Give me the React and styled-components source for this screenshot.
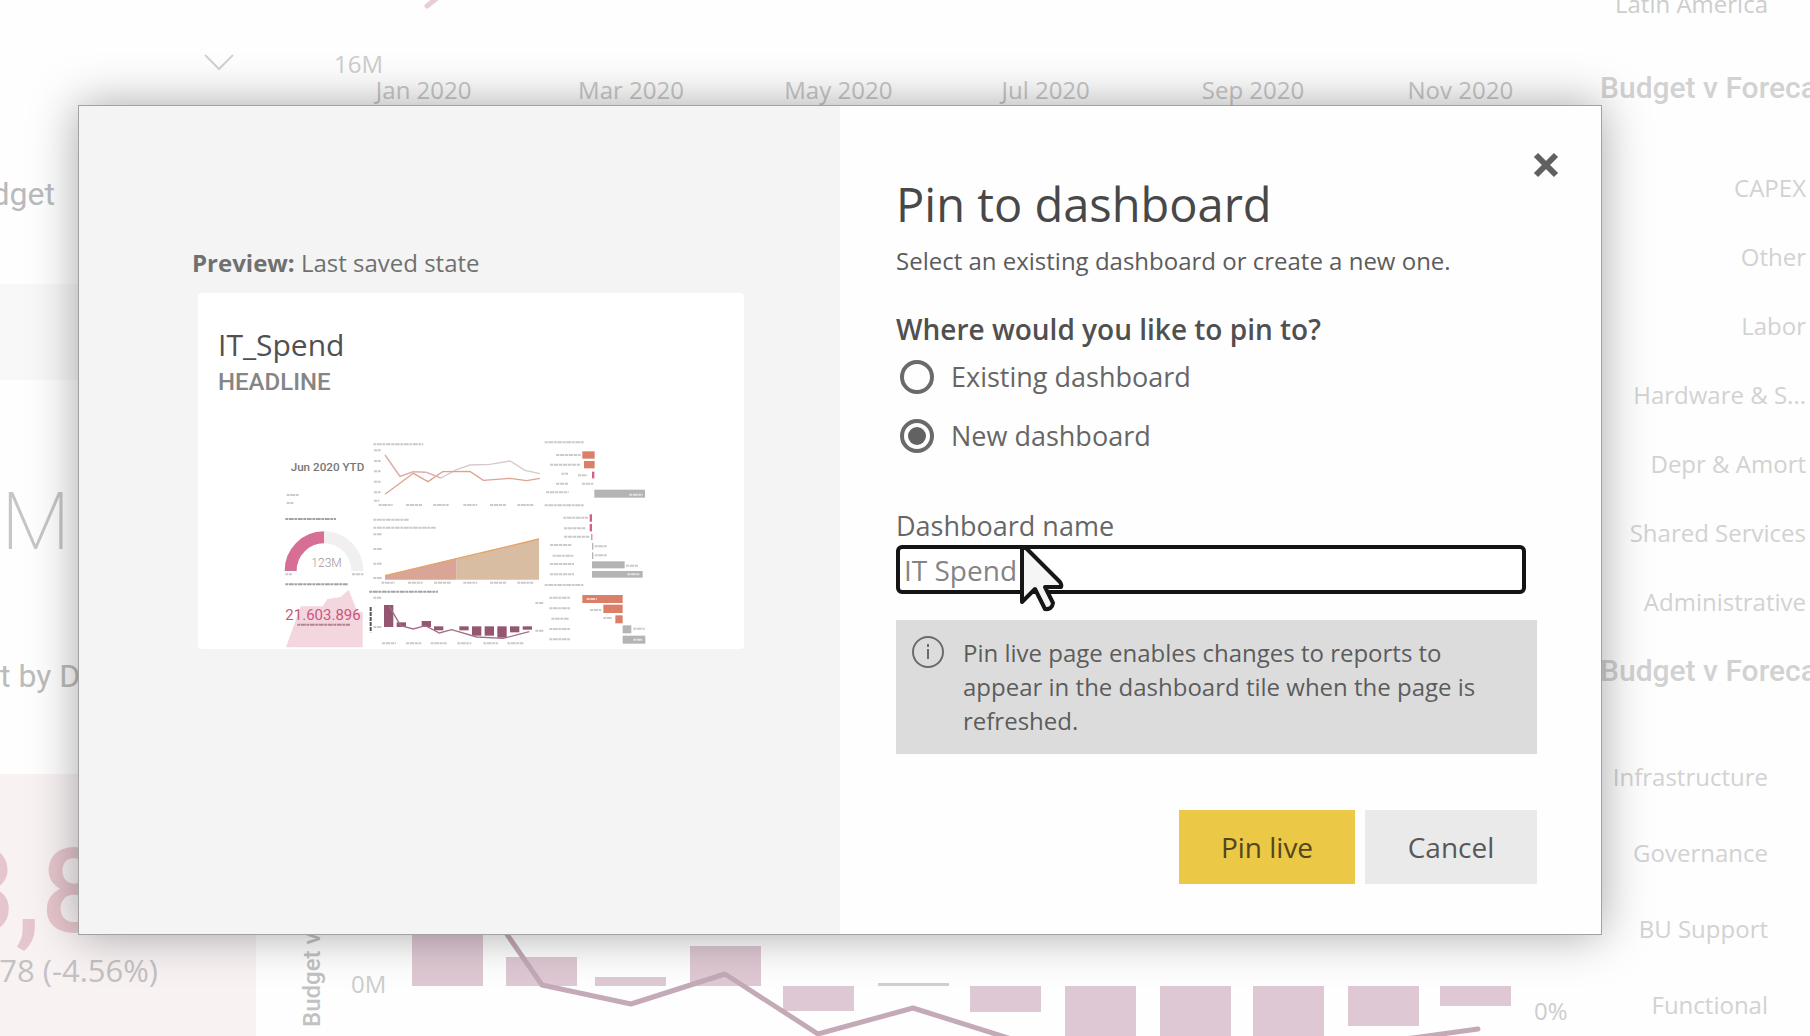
import React, { useState } from "react";
import styled, { createGlobalStyle } from "styled-components";

const GlobalStyle = createGlobalStyle`
  *, *::before, *::after { box-sizing: border-box; }
  body {
    margin: 0;
    background: #fefefe;
    font-family: "Open Sans", "Noto Sans", sans-serif;
  }
  h1, h2, h3, p, ul { margin: 0; padding: 0; font-weight: 400; }
`;

const Page = styled.div`
  position: relative;
  height: 100vh;
  overflow: hidden;
`;

/* ---------- report behind the dialog ---------- */

const Report = styled.main`
  display: grid;
  grid-template-columns: 256px 1fr 210px;
  height: 100%;
  color: #cdcdcd;
  white-space: nowrap;
`;

const Column = styled.section`
  display: flex;
  flex-direction: column;
  min-width: 0;
  overflow: hidden;
`;

const ChevronRow = styled.div`
  display: flex;
  justify-content: flex-end;
  padding: 52px 22px 0 0;
  height: 72px;
`;

const ClippedText = styled.div`
  display: flex;
  justify-content: flex-end;
  width: ${(p) => p.$width}px;
  color: ${(p) => p.$color || "#b9babd"};
  font-family: ${(p) => (p.$din ? "Roboto, sans-serif" : "inherit")};
  font-size: ${(p) => p.$size}px;
  font-weight: ${(p) => p.$weight || 400};
  line-height: ${(p) => p.$line}px;
  margin-top: ${(p) => p.$gap || 0}px;
`;

const Slicer = styled.div`
  height: 96px;
  margin-top: 70px;
  background: #f8f8f8;
`;

const KpiTitle = styled.h3`
  margin-top: 84px;
  color: #bcbcbc;
  font: 400 32px/40px Roboto, sans-serif;
`;

const Kpi = styled.div`
  flex: 1;
  margin-top: 78px;
  background: #f8f2f3;
`;

const AxisTop = styled.div`
  padding: 48px 0 0 78px;
  font-size: 24px;
  line-height: 32px;
`;

const Months = styled.div`
  display: grid;
  grid-template-columns: repeat(6, 1fr);
  padding: 0 36px 0 64px;
  margin-top: -6px;
  font-size: 24px;
  line-height: 32px;
  color: #c8c8c8;
  text-align: center;
`;

const BottomChart = styled.div`
  display: flex;
  margin-top: auto;
  height: 110px;
`;

const AxisTitle = styled.div`
  width: 84px;
  padding: 9px 42px 0 0;
  writing-mode: vertical-rl;
  transform: rotate(180deg);
  color: #c2c2c2;
  font: 500 24px/28px Roboto, sans-serif;
`;

const ChartSvg = styled.svg`
  display: block;
  flex: 1;
  min-width: 0;
  height: 110px;
`;

const TopLabel = styled.p`
  height: 20px;
  padding-right: 42px;
  margin-top: -12px;
  font-size: 24px;
  line-height: 32px;
  text-align: right;
`;

const ChartHeading = styled.h3`
  margin-top: ${(p) => p.$gap}px;
  color: #d2d2d2;
  font: 500 30px/40px Roboto, sans-serif;
`;

const Categories = styled.ul`
  margin-top: ${(p) => p.$gap}px;
  padding-right: ${(p) => p.$inset}px;
  list-style: none;
  font-size: 24px;
  line-height: ${(p) => p.$pitch}px;
  text-align: right;
  color: #d2d2d2;
  li { display: flex; justify-content: flex-end; }
`;

/* ---------- dialog ---------- */

const Overlay = styled.div`
  position: absolute;
  inset: 0;
  display: flex;
  align-items: flex-start;
  padding: 105px 208px 0 78px;
`;

const Dialog = styled.div`
  display: grid;
  grid-template-columns: 1fr 1fr;
  flex: 1;
  border: 1px solid #a2a2a2;
  background: #fefefe;
  box-shadow: 0 0 44px rgba(0, 0, 0, 0.34);
`;

const PreviewPane = styled.section`
  padding: 140px 96px 0 113px;
  background: #f4f4f4;
`;

const PreviewCaption = styled.p`
  color: #707070;
  font-size: 24px;
  line-height: 34px;
  b { font-weight: 700; }
`;

const Card = styled.div`
  margin: 13px 0 0 6px;
  padding: 32px 0 0 20px;
  border-radius: 4px;
  background: #fff;
`;

const CardTitle = styled.h2`
  color: #505050;
  font-size: 30px;
  line-height: 40px;
`;

const CardSubtitle = styled.p`
  margin-top: 2px;
  color: #858585;
  font: 500 24px/30px Roboto, sans-serif;
`;

const Thumbnail = styled.svg`
  display: block;
  width: 400px;
  max-width: 100%;
  height: 220px;
  margin: 32px 0 0 52px;
`;

const FormPane = styled.form`
  position: relative;
  display: flex;
  flex-direction: column;
  padding: 68px 64px 50px 56px;
  color: #5c5c5c;
`;

const CloseButton = styled.button`
  position: absolute;
  top: 40px;
  right: 36px;
  display: flex;
  align-items: center;
  justify-content: center;
  width: 38px;
  height: 38px;
  padding: 0;
  border: 0;
  background: none;
`;

const Title = styled.h1`
  color: #484848;
  font-size: 47px;
  line-height: 60px;
`;

const Subtitle = styled.p`
  margin-top: 10px;
  font-size: 24px;
  line-height: 34px;
`;

const Choices = styled.fieldset`
  display: flex;
  flex-direction: column;
  gap: 25px;
  min-width: 0;
  margin: 34px 0 0;
  padding: 0;
  border: 0;
`;

const Question = styled.legend`
  padding: 0 0 14px;
  color: #505050;
  font-size: 28px;
  font-weight: 600;
  line-height: 34px;
`;

const Choice = styled.label`
  display: flex;
  align-items: center;
  gap: 17px;
  padding-left: 4px;
  color: #666;
  font-size: 27px;
  line-height: 34px;
`;

const Radio = styled.input`
  appearance: none;
  display: grid;
  place-items: center;
  width: 34px;
  height: 34px;
  margin: 0;
  border: 4px solid #6a6a6a;
  border-radius: 50%;
  &:checked::before {
    content: "";
    width: 18px;
    height: 18px;
    border-radius: 50%;
    background: #626262;
  }
`;

const FieldLabel = styled.label`
  margin-top: 56px;
  color: #666;
  font-size: 27px;
  line-height: 34px;
`;

const InputWrap = styled.div`
  position: relative;
  margin: 2px 11px 0 0;
`;

const TextInput = styled.input`
  display: block;
  width: 100%;
  height: 49px;
  padding: 0 4px;
  border: 4px solid #141414;
  border-radius: 6px;
  outline: 0;
  background: #fff;
  color: #848484;
  font: 400 28px/34px "Open Sans", sans-serif;
`;

const Pointer = styled.svg`
  position: absolute;
  left: 123px;
  top: 0;
  width: 46px;
  height: 70px;
  pointer-events: none;
`;

const Notice = styled.div`
  display: flex;
  gap: 18px;
  margin-top: 26px;
  padding: 16px 40px 16px 16px;
  background: #dcdcdc;
  color: #5c5c5c;
  font-size: 24px;
  line-height: 34px;
  svg { flex: none; }
`;

const Actions = styled.div`
  display: flex;
  justify-content: flex-end;
  gap: 10px;
  margin-top: 56px;
`;

const Button = styled.button`
  width: ${(p) => (p.$primary ? 176 : 172)}px;
  height: 74px;
  padding: 0;
  border: 0;
  background: ${(p) => (p.$primary ? "#ebc846" : "#eaeaea")};
  color: ${(p) => (p.$primary ? "#54461c" : "#585858")};
  font: 400 28px/34px "Open Sans", sans-serif;
`;

const spendTypes = ["CAPEX", "Other", "Labor", "Hardware & S...", "Depr & Amort", "Shared Services", "Administrative"];
const areas = ["Infrastructure", "Governance", "BU Support", "Functional"];
const months = ["Jan 2020", "Mar 2020", "May 2020", "Jul 2020", "Sep 2020", "Nov 2020"];

// x, top and height of each variance bar
const bars = [
  [72, 0, 60], [166, 31, 29], [255, 51, 9], [350, 20, 40], [443, 60, 25], [538, 57, 3],
  [630, 60, 26], [725, 60, 60], [820, 60, 60], [913, 60, 60], [1008, 60, 40], [1100, 60, 20],
];

function VarianceChart() {
  return (
    <ChartSvg viewBox="0 0 1260 110" preserveAspectRatio="xMinYMin meet">
      {bars.map(([x, y, h], i) => (
        <rect key={x} x={x} y={y} width="71" height={h} fill={i === 5 ? "#d6cdd1" : "#dec8d3"} />
      ))}
      <polyline
        points="164,4 202,59 291,78 385,48 478,108 573,82 700,122 1000,122 1138,103"
        fill="none" stroke="#c4a9b7" strokeWidth="5" strokeLinejoin="round" strokeLinecap="round"
      />
      <g fill="#cdcdcd" fontSize="24">
        <text x="11" y="67">0M</text>
        <text x="1194" y="94">0%</text>
      </g>
    </ChartSvg>
  );
}

// tail of the trend line that ends above the month axis
const TrendTail = styled.svg`
  display: block;
  width: 20px;
  height: 10px;
  margin: 0 0 -10px 168px;
`;

function Dashes({ items, fill = "#a9a9a9" }) {
  return items.map(([x, y, w]) => (
    <line key={`${x}-${y}`} x1={x} y1={y} x2={x + w} y2={y} stroke={fill} strokeWidth="6" strokeDasharray="9 2 14 2" opacity="0.6" />
  ));
}

function DashboardThumbnail() {
  return (
    <Thumbnail viewBox="0 0 1200 660" role="img" aria-label="IT_Spend report page">
      <text x="62" y="126" fontFamily="Roboto, sans-serif" fontSize="35" fontWeight="500" fill="#777">Jun 2020 YTD</text>
      <Dashes items={[[50, 198, 38], [50, 222, 20]]} />
      <Dashes fill="#666" items={[[46, 270, 152], [46, 466, 188], [298, 488, 206]]} />
      <path d="M62 426 A100 100 0 0 1 162 325" fill="none" stroke="#d66e96" strokeWidth="36" />
      <path d="M162 325 A100 100 0 0 1 262 426" fill="none" stroke="#f2eff0" strokeWidth="36" />
      <text x="124" y="413" fontFamily="Roboto, sans-serif" fontSize="36" fontWeight="300" fill="#999">123M</text>
      <Dashes items={[[46, 436, 20], [246, 436, 34]]} />
      <path d="M48 655 L92 532 L158 532 L172 510 L212 504 L236 482 L262 548 L278 548 V655Z" fill="#f3d6de" />
      <text x="46" y="574" fontFamily="Roboto, sans-serif" fontSize="45" fill="#c9577d">21.603.896</text>
      <Dashes fill="#84505f" items={[[82, 587, 158]]} />

      <Dashes items={[
        [310, 46, 150], [312, 64, 20], [312, 96, 20], [312, 127, 20], [312, 158, 20], [312, 190, 20], [312, 215, 16],
        [326, 228, 42], [408, 228, 48], [490, 228, 46], [580, 228, 42], [660, 228, 48], [742, 228, 48],
        [310, 272, 106], [310, 296, 188], [310, 316, 26], [310, 360, 26], [310, 404, 26], [310, 447, 26],
        [334, 461, 40], [414, 461, 44], [492, 461, 50], [580, 461, 42], [660, 461, 48], [742, 461, 48],
        [310, 506, 24], [310, 594, 24], [336, 643, 42], [408, 643, 46], [482, 643, 48], [562, 643, 42], [640, 643, 44], [712, 643, 48],
        [796, 522, 24], [796, 605, 24],
      ]} />
      <polyline points="345,78 390,142 430,128 470,130 512,147 560,122 600,108 660,106 720,96 765,124 810,134" fill="none" stroke="#d8c9cb" strokeWidth="4" />
      <polyline points="345,196 430,133 474,158 518,128 600,127 640,154 720,148 770,155 810,148" fill="none" stroke="#dfa292" strokeWidth="4" />
      <polyline points="345,78 390,142 430,128 470,130 512,147" fill="none" stroke="#e4b1ab" strokeWidth="4" />
      <path d="M345 440 L560 388 V452 H345Z" fill="#d8a597" />
      <path d="M560 388 L807 330 V452 H560Z" fill="#d9bda3" />
      <polyline points="345,440 807,330" fill="none" stroke="#e5a266" strokeWidth="4" />
      <path d="M302 534V610" stroke="#555" strokeWidth="6" strokeDasharray="12 3" />
      <g fill="#955672">
        <rect x="342" y="528" width="28" height="66" /><rect x="380" y="580" width="28" height="14" />
        <rect x="455" y="576" width="28" height="18" /><rect x="492" y="592" width="28" height="12" />
        <rect x="568" y="592" width="28" height="12" /><rect x="606" y="592" width="28" height="28" />
        <rect x="644" y="592" width="28" height="28" /><rect x="682" y="592" width="28" height="34" />
        <rect x="720" y="592" width="28" height="18" /><rect x="758" y="592" width="28" height="10" />
      </g>
      <polyline points="358,532 392,590 430,600 466,590 508,612 545,602 620,624 700,628 778,608" fill="none" stroke="#9d7187" strokeWidth="4" />

      <Dashes items={[
        [824, 40, 118], [858, 78, 74], [840, 107, 90], [874, 134, 20], [924, 139, 28], [858, 164, 38], [936, 164, 34], [828, 190, 68], [824, 229, 118],
        [880, 266, 74], [882, 298, 66], [882, 323, 76], [840, 348, 66], [974, 352, 38], [848, 380, 62], [974, 379, 38],
        [840, 405, 72], [1068, 410, 38], [840, 436, 72], [824, 468, 116],
        [838, 506, 62], [838, 538, 62], [960, 543, 34], [844, 569, 52], [1000, 567, 26], [838, 600, 62], [1090, 599, 34], [838, 631, 62],
      ]} />
      <g fill="#da8069">
        <rect x="937" y="67" width="37" height="22" /><rect x="942" y="96" width="32" height="22" />
        <rect x="937" y="498" width="121" height="24" /><rect x="1000" y="527" width="58" height="25" />
        <rect x="1036" y="559" width="22" height="24" />
      </g>
      <g fill="#d06084">
        <rect x="966" y="128" width="7" height="20" /><rect x="959" y="256" width="7" height="22" />
        <rect x="959" y="285" width="7" height="22" /><rect x="964" y="315" width="3" height="18" />
      </g>
      <g fill="#b4b4b4">
        <rect x="973" y="182" width="152" height="24" /><rect x="966" y="342" width="4" height="20" />
        <rect x="966" y="370" width="4" height="20" /><rect x="966" y="397" width="98" height="21" />
        <rect x="966" y="426" width="152" height="20" /><rect x="1058" y="589" width="26" height="24" />
        <rect x="1058" y="620" width="68" height="24" />
      </g>
      <Dashes fill="#fff" items={[[1078, 197, 40], [1072, 436, 38], [950, 510, 30], [1090, 632, 28]]} />
    </Thumbnail>
  );
}

export default function App() {
  const [target, setTarget] = useState("new");
  const [name, setName] = useState("IT Spend");

  return (
    <Page>
      <GlobalStyle />
      <Report>
        <Column>
          <ChevronRow>
            <svg width="30" height="20" viewBox="0 0 30 20" fill="none" stroke="#d2d2d2" strokeWidth="2">
              <path d="M1 3 L15 17 L29 3" />
            </svg>
          </ChevronRow>
          <ClippedText $din $width={55} $size={32} $line={40} $gap={102}>dget</ClippedText>
          <Slicer />
          <ClippedText $din $width={70} $size={80} $weight={200} $line={100} $gap={92} $color="#c6c6c6">M</ClippedText>
          <KpiTitle>t by Department</KpiTitle>
          <Kpi>
            <ClippedText $din $width={107} $size={116} $weight={500} $line={116} $gap={60} $color="#e6c6cd">3,8</ClippedText>
            <ClippedText $width={158} $size={31} $line={40} $color="#c4c1c2">78 (-4.56%)</ClippedText>
          </Kpi>
        </Column>

        <Column>
          <TrendTail viewBox="0 0 20 10">
            <path d="M3 6 L13 -2" fill="none" stroke="#e6cdd6" strokeWidth="5" strokeLinecap="round" />
          </TrendTail>
          <AxisTop>16M</AxisTop>
          <Months>
            {months.map((m) => <span key={m}>{m}</span>)}
          </Months>
          <BottomChart>
            <AxisTitle>Budget v Forecast</AxisTitle>
            <VarianceChart />
          </BottomChart>
        </Column>

        <Column>
          <TopLabel>Latin America</TopLabel>
          <ChartHeading $gap={60}>Budget v Forecast</ChartHeading>
          <Categories $gap={45} $inset={4} $pitch={69}>
            {spendTypes.map((t) => <li key={t}>{t}</li>)}
          </Categories>
          <ChartHeading $gap={15}>Budget v Forecast</ChartHeading>
          <Categories $gap={48} $inset={42} $pitch={76}>
            {areas.map((t) => <li key={t}>{t}</li>)}
          </Categories>
        </Column>
      </Report>

      <Overlay>
        <Dialog role="dialog" aria-modal="true" aria-labelledby="pin-title">
          <PreviewPane>
            <PreviewCaption><b>Preview:</b> Last saved state</PreviewCaption>
            <Card>
              <CardTitle>IT_Spend</CardTitle>
              <CardSubtitle>HEADLINE</CardSubtitle>
              <DashboardThumbnail />
            </Card>
          </PreviewPane>

          <FormPane onSubmit={(e) => e.preventDefault()}>
            <CloseButton type="button" aria-label="Close">
              <svg width="26" height="26" viewBox="0 0 26 26" stroke="#606060" strokeWidth="6">
                <path d="M3 3 L23 23 M23 3 L3 23" />
              </svg>
            </CloseButton>
            <Title id="pin-title">Pin to dashboard</Title>
            <Subtitle>Select an existing dashboard or create a new one.</Subtitle>

            <Choices>
              <Question>Where would you like to pin to?</Question>
              <Choice>
                <Radio type="radio" name="target" checked={target === "existing"} onChange={() => setTarget("existing")} />
                Existing dashboard
              </Choice>
              <Choice>
                <Radio type="radio" name="target" checked={target === "new"} onChange={() => setTarget("new")} />
                New dashboard
              </Choice>
            </Choices>

            <FieldLabel htmlFor="dashboard-name">Dashboard name</FieldLabel>
            <InputWrap>
              <TextInput id="dashboard-name" type="text" value={name} onChange={(e) => setName(e.target.value)} />
              <Pointer viewBox="0 0 46 70">
                <path d="M3 3 V57 L16 44 L26 64 Q33 65 34 58 L26 42 H42 Q43 40 41 37 L7 3Z" fill="#f5f5f6" stroke="#161616" strokeWidth="4" strokeLinejoin="round" />
              </Pointer>
            </InputWrap>

            <Notice>
              <svg width="33" height="34" viewBox="0 0 33 34" fill="none" stroke="#6b6b6b" strokeWidth="2">
                <circle cx="16" cy="16" r="15" />
                <path d="M16 13 V23 M16 8 V11" />
              </svg>
              <p>Pin live page enables changes to reports to appear in the dashboard tile when the page is refreshed.</p>
            </Notice>

            <Actions>
              <Button type="submit" $primary>Pin live</Button>
              <Button type="button">Cancel</Button>
            </Actions>
          </FormPane>
        </Dialog>
      </Overlay>
    </Page>
  );
}
